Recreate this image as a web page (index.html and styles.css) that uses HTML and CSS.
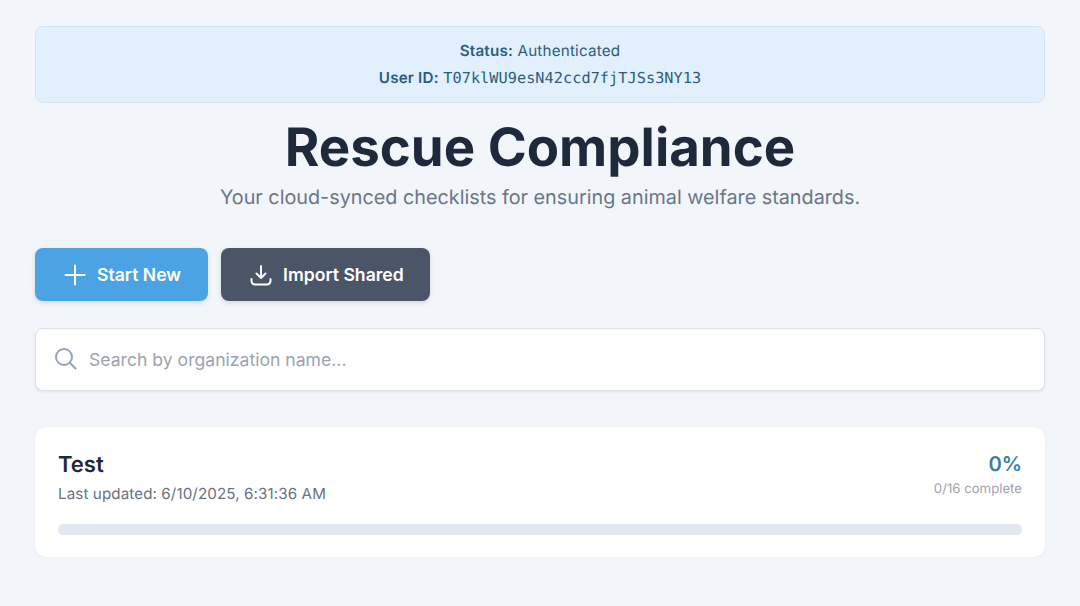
FILE: index.html
```html
<!DOCTYPE html>
<html lang="en">

<head>
  <title>Rescue Compliance</title>
  <link rel="stylesheet" href="styles.css">
</head>

<body>
  <div class="main-container">
    <div class="auth-box">
      <p><strong>Status:</strong> Authenticated</p>
      <p><strong>User ID:</strong> <span class="user-id">T07klWU9esN42ccd7fjTJSs3NY13</span></p>
    </div>

    <header class="page-header">
      <h1>Rescue Compliance</h1>
      <p>Your cloud-synced checklists for ensuring animal welfare standards.</p>
    </header>

    <div class="actions">
      <button class="btn btn-primary">
        <svg width="24" height="24" viewBox="0 0 24 24" fill="none" stroke="currentColor" stroke-width="2"
          stroke-linecap="round" stroke-linejoin="round">
          <path d="M12 2.5v19M2.5 12h19" />
        </svg>
        Start New
      </button>
      <button class="btn btn-dark">
        <svg width="24" height="24" viewBox="0 0 24 24" fill="none" stroke="currentColor" stroke-width="2"
          stroke-linecap="round" stroke-linejoin="round">
          <path d="M12 3v12M7.500 10.500 12 15l4.500-4.500M2.500 16v2a3.500 3.500 0 0 0 3.500 3.500h12a3.500 3.500 0 0 0 3.500-3.500v-2" />
        </svg>
        Import Shared
      </button>
    </div>

    <div class="search-box">
      <svg width="24" height="24" viewBox="0 0 24 24" fill="none" stroke="currentColor" stroke-width="2"
        stroke-linecap="round" stroke-linejoin="round">
        <circle cx="10" cy="10" r="8" />
        <path d="m16 16 5.500 5.500" />
      </svg>
      <input type="text" placeholder="Search by organization name...">
    </div>

    <div class="card">
      <div class="card-top">
        <div>
          <h3>Test</h3>
          <p class="updated">Last updated: 6/10/2025, 6:31:36 AM</p>
        </div>
        <div class="card-progress">
          <div class="percent">0%</div>
          <div class="count">0/16 complete</div>
        </div>
      </div>
      <div class="progress-bar"></div>
    </div>
  </div>
</body>

</html>
```

FILE: styles.css
```css
* {
  box-sizing: border-box;
}

body {
  margin: 0;
  background-color: #f2f6fb;
  color: #1e293b;
  font-family: "Inter", sans-serif;
  text-rendering: geometricPrecision;
}

.main-container {
  width: 1010px;
  margin: 0 auto;
  padding-top: 26px;
}

.auth-box {
  height: 77px;
  padding-top: 10px;
  background-color: #e1f0fc;
  border: 1px solid #cfe4f6;
  border-radius: 8px;
  color: #2c5d7f;
  font-size: 15.2px;
  letter-spacing: 0.2px;
  line-height: 27px;
  text-align: center;
}

.auth-box p {
  margin: 0;
}

.auth-box strong {
  font-weight: 600;
}

.user-id {
  font-family: "DejaVu Sans Mono", monospace;
  font-size: 15.2px;
  letter-spacing: 0.07px;
}

.page-header {
  margin-top: 15px;
  text-align: center;
}

.page-header h1 {
  margin: 0;
  font-size: 52.8px;
  font-weight: 700;
  line-height: 58px;
  color: #1e293b;
}

.page-header p {
  margin: 7px 0 0;
  font-size: 19.8px;
  line-height: 28px;
  color: #6b7589;
}

.actions {
  display: flex;
  gap: 13px;
  margin-top: 37.4px;
}

.btn {
  display: flex;
  align-items: center;
  gap: 10px;
  height: 52.8px;
  padding: 0 26px 0 28px;
  border: none;
  border-radius: 8px;
  color: white;
  font-family: "Inter", sans-serif;
  font-size: 17.6px;
  font-weight: 600;
  box-shadow: 0 2px 5px rgba(0, 0, 0, 0.12);
}

.btn-primary {
  padding-right: 27px;
  background-color: #4ba3e3;
}

.btn-dark {
  background-color: #4a5568;
}

.search-box {
  display: flex;
  align-items: center;
  gap: 9px;
  height: 63px;
  margin-top: 26.6px;
  padding: 0 18px;
  background-color: white;
  border: 1px solid #dde3ea;
  border-radius: 8px;
  color: #94a3b8;
  box-shadow: 0 1px 3px rgba(0, 0, 0, 0.08);
}

.search-box input {
  flex: 1;
  border: none;
  outline: none;
  background: none;
  font-family: "Inter", sans-serif;
  font-size: 17.6px;
}

.search-box input::placeholder {
  color: #9ca3af;
}

.card {
  height: 130.6px;
  margin-top: 35.9px;
  padding: 24px 23px 0;
  background-color: white;
  border-radius: 12px;
  box-shadow: 0 1px 3px rgba(0, 0, 0, 0.04);
}

.card-top {
  display: flex;
  justify-content: space-between;
}

.card h3 {
  margin: 1px 0 0;
  font-size: 22px;
  font-weight: 600;
  line-height: 27px;
  color: #1e293b;
}

.updated {
  margin: 4px 0 0;
  font-size: 15.2px;
  letter-spacing: 0.09px;
  line-height: 22px;
  color: #6b7280;
}

.card-progress {
  text-align: right;
}

.percent {
  font-size: 20.2px;
  font-weight: 600;
  line-height: 26px;
  color: #3d7ea6;
}

.count {
  margin-top: 2px;
  font-size: 13.2px;
  line-height: 20px;
  color: #9ca3af;
}

.progress-bar {
  height: 11px;
  margin-top: 19px;
  background-color: #e2e8f0;
  border-radius: 6px;
}
```
